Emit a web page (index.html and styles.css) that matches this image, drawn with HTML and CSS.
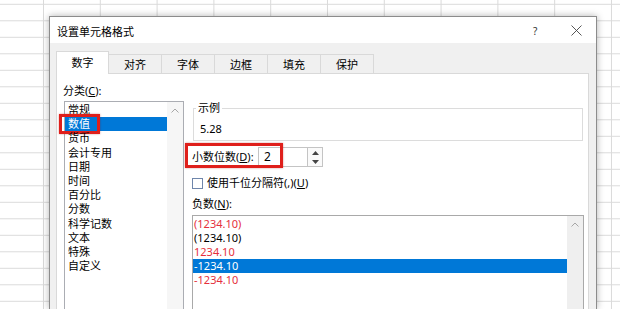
FILE: index.html
```html
<!doctype html>
<html lang="zh-CN">
<head>
	<meta charset="UTF-8">
	<title>设置单元格格式</title>
	<link rel="stylesheet" href="styles.css">
</head>
<body>
	<div class="dialog">
		<div class="titlebar">
			<span class="title">设置单元格格式</span>
			<span class="help">?</span>
			<svg class="close" width="11" height="11" viewBox="0 0 11 11"><path d="M0.5 0.5L10.5 10.5M10.5 0.5L0.5 10.5" stroke="#444" stroke-width="0.9" fill="none"/></svg>
		</div>
		<ul class="tabs">
			<li class="tab on">数字</li>
			<li class="tab">对齐</li>
			<li class="tab">字体</li>
			<li class="tab">边框</li>
			<li class="tab">填充</li>
			<li class="tab">保护</li>
		</ul>
		<div class="panel">
			<div class="left">
				<p class="label">分类(<u>C</u>):</p>
				<div class="listbox cats">
					<ul class="items">
						<li>常规</li>
						<li class="sel"><span class="mark markCat"></span>数值</li>
						<li>货币</li>
						<li>会计专用</li>
						<li>日期</li>
						<li>时间</li>
						<li>百分比</li>
						<li>分数</li>
						<li>科学记数</li>
						<li>文本</li>
						<li>特殊</li>
						<li>自定义</li>
					</ul>
					<div class="vscroll">
						<svg width="8" height="5" viewBox="0 0 8 5"><path d="M0.5 4.5L4 1L7.5 4.5" stroke="#a6a6a6" fill="none"/></svg>
					</div>
				</div>
			</div>
			<div class="right">
				<fieldset class="sample">
					<legend>示例</legend>
					<p>5.28</p>
				</fieldset>
				<div class="decimals">
					<span class="mark markDec"></span>
					<span class="decLabel">小数位数(<u>D</u>):</span>
					<span class="num">2</span>
					<span class="spin">
						<span class="spinBtn"><svg width="7" height="4" viewBox="0 0 7 4"><path d="M0 4L3.5 0L7 4Z" fill="#444"/></svg></span>
						<span class="spinBtn"><svg width="7" height="4" viewBox="0 0 7 4"><path d="M0 0L3.5 4L7 0Z" fill="#444"/></svg></span>
					</span>
				</div>
				<div class="check"><span class="box"></span>使用千位分隔符(,)(<u>U</u>)</div>
				<p class="label negLabel">负数(<u>N</u>):</p>
				<div class="listbox negs">
					<ul class="items">
						<li class="red">(1234.10)</li>
						<li>(1234.10)</li>
						<li class="red">1234.10</li>
						<li class="sel">-1234.10</li>
						<li class="red">-1234.10</li>
					</ul>
					<div class="vscroll">
						<svg width="8" height="5" viewBox="0 0 8 5"><path d="M0.5 4.5L4 1L7.5 4.5" stroke="#a6a6a6" fill="none"/></svg>
					</div>
				</div>
			</div>
		</div>
	</div>
</body>
</html>
```

FILE: styles.css
```css
html, body, div, p, ul, li, fieldset, legend {
	margin: 0;
	padding: 0;
}
html {
	overflow: hidden;
}
body {
	width: 620px;
	height: 309px;
	padding: 16px 0 0 49px;
	box-sizing: border-box;
	overflow: hidden;
	background-color: #fff;
	background-image: linear-gradient(to right, #dadada 1px, transparent 1px), linear-gradient(to bottom, #dadada 1px, transparent 1px);
	background-size: 56.8px 100%, 100% 16.5px;
	background-position: 43px 0, 0 3.8px;
	font-family: "Noto Sans", "Noto Sans CJK SC", sans-serif;
	font-size: 11px;
	color: #000;
}
ul {
	list-style: none;
}
u {
	text-decoration: underline;
	text-underline-offset: 1px;
}
/* dialog runs off the bottom of the shot, so no bottom borders */
.dialog {
	width: 548px;
	height: 293px;
	box-sizing: border-box;
	border: 1px solid #8c8c8c;
	border-bottom: none;
	background-color: #f0f0f0;
	box-shadow: 0 0 7px rgba(0, 0, 0, 0.3);
}
.titlebar {
	display: flex;
	align-items: center;
	height: 26px;
	padding: 1px 0 0 7px;
	box-sizing: border-box;
	background-color: #fff;
}
.title {
	flex: 1;
}
.help {
	width: 8px;
	margin-right: 30px;
	color: #333;
	font-size: 10px;
}
.close {
	margin-right: 14px;
}
.tabs {
	display: flex;
	align-items: flex-end;
	height: 22px;
	margin-top: 8px;
	padding-left: 6px;
}
.tab {
	width: 54px;
	height: 19px;
	margin-left: -1px;
	box-sizing: border-box;
	border: 1px solid #d9d9d9;
	border-bottom: none;
	line-height: 19px;
	text-align: center;
	background-color: #f0f0f0;
}
.tab:first-child {
	margin-left: 0;
	width: 53px;
}
.tab.on {
	height: 23px;
	margin-bottom: -1px;
	line-height: 21px;
	background-color: #fff;
	z-index: 1;
}
.panel {
	display: grid;
	grid-template-columns: 121px 392px;
	column-gap: 8px;
	align-items: start;
	width: 533px;
	height: 236px;
	margin-left: 6px;
	padding: 10px 0 0 6px;
	box-sizing: border-box;
	border: 1px solid #d9d9d9;
	border-bottom: none;
	background-color: #fff;
}
.label {
	line-height: 14px;
}
.listbox {
	display: flex;
	box-sizing: border-box;
	border: 1px solid #abadb3;
	border-bottom: none;
	background-color: #fff;
}
.cats {
	margin: 3px 0 0 1px;
	width: 120px;
	height: 208px;
}
.items {
	flex: 1;
}
.items li {
	position: relative;
	height: 14.2px;
	line-height: 14px;
	padding-left: 3px;
	white-space: nowrap;
}
.cats .items li:first-child {
	margin-top: 1px;
}
.items li.sel {
	color: #fff;
	background-color: #0078d7;
}
.vscroll {
	width: 16px;
	display: flex;
	justify-content: center;
	padding-top: 6px;
	box-sizing: border-box;
	background-color: #f6f6f6;
}
.vscroll svg {
	display: block;
}
.mark {
	position: absolute;
	border: 3px solid #df1f1b;
	box-sizing: border-box;
	box-shadow: 0 0 2px rgba(160, 0, 0, 0.4);
}
.markCat {
	left: -6px;
	top: -3px;
	width: 41px;
	height: 20px;
}
.sample {
	margin: 17px 1px 0 1px;
	padding: 7px 6px 4px;
	border: 1px solid #dcdcdc;
}
.sample legend {
	margin-left: -4px;
	padding: 0 2px;
	line-height: 14px;
}
.sample p {
	line-height: 14px;
}
.decimals {
	position: relative;
	display: flex;
	align-items: center;
	height: 20px;
	margin-top: 6px;
}
.markDec {
	left: -7px;
	top: -4px;
	width: 98px;
	height: 25px;
}
.decLabel {
	width: 66px;
	line-height: 14px;
}
.num {
	width: 49px;
	height: 20px;
	padding-left: 5px;
	box-sizing: border-box;
	border: 1px solid #c4c4c4;
	border-right: none;
	line-height: 18px;
	font-size: 12px;
}
.spin {
	display: flex;
	flex-direction: column;
	width: 16px;
	height: 20px;
	box-sizing: border-box;
	border: 1px solid #c4c4c4;
	background-color: #fafafa;
}
.spinBtn {
	flex: 1;
	display: flex;
	align-items: center;
	justify-content: center;
}
.spinBtn svg {
	display: block;
}
.check {
	display: flex;
	align-items: center;
	height: 14px;
	margin-top: 9px;
	line-height: 14px;
}
.box {
	width: 11px;
	height: 11px;
	margin-right: 4px;
	box-sizing: border-box;
	border: 1px solid #6f86ab;
	background-color: #fff;
}
.negLabel {
	margin-top: 7px;
}
.negs {
	margin-top: 4px;
	height: 94px;
	border-color: #a9a9a9;
}
.negs .items {
	padding-top: 1px;
}
.negs .items li {
	height: 14px;
	padding-left: 1px;
}
.negs .vscroll {
	background-color: #efefef;
}
.red {
	color: #e5303c;
}
```
